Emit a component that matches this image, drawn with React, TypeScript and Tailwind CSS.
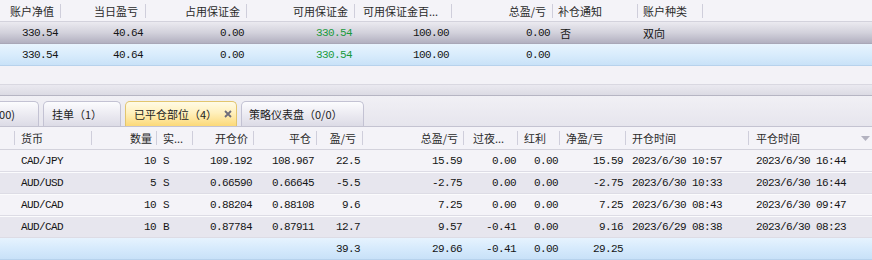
import React from "react";

const cjk = "font-['Noto_Sans_CJK_SC',sans-serif] text-[11px] leading-[16px]";
const mono = "font-['Liberation_Mono','Noto_Sans_CJK_SC',monospace] text-[11px] tracking-[-0.6px] leading-[16px]";

type HProps = { w: string; right?: boolean; pad: string; sep?: boolean; children?: React.ReactNode; extra?: React.ReactNode };

function HCell({ w, right, pad, sep = true, children, extra }: HProps) {
  return (
    <div className={`${w} shrink-0 h-full flex items-center`}>
      <div className={`flex-1 min-w-0 whitespace-nowrap overflow-hidden ${right ? "text-right" : "text-left"} ${pad} ${cjk} text-[#2a2a2a]`}>
        {children}
      </div>
      {extra}
      {sep && <div className="w-px h-[14px] bg-[#cfcedb] shrink-0" />}
    </div>
  );
}

type DProps = { w: string; right?: boolean; pad: string; font?: string; color?: string; children?: React.ReactNode };

function DCell({ w, right, pad, font = mono, color = "text-[#151515]", children }: DProps) {
  return (
    <div className={`${w} shrink-0 h-full flex items-center`}>
      <div className={`flex-1 min-w-0 whitespace-nowrap overflow-hidden ${right ? "text-right" : "text-left"} ${pad} ${font} ${color}`}>
        {children}
      </div>
    </div>
  );
}

const topW = ["w-[61px]", "w-[85px]", "w-[101px]", "w-[108px]", "w-[97px]", "w-[101px]", "w-[85px]", "w-[65px]"];

function TopRow({ bg, first }: { bg: string; first: boolean }) {
  return (
    <div className={`flex h-[22px] ${bg}`}>
      <DCell w={topW[0]} right pad="pr-[3px]">330.54</DCell>
      <DCell w={topW[1]} right pad="pr-[3px]">40.64</DCell>
      <DCell w={topW[2]} right pad="pr-[3px]">0.00</DCell>
      <DCell w={topW[3]} right pad="pr-[3px]" color="text-[#1a9a3c]">330.54</DCell>
      <DCell w={topW[4]} right pad="pr-[3px]">100.00</DCell>
      <DCell w={topW[5]} right pad="pr-[3px]">0.00</DCell>
      <DCell w={topW[6]} pad="pl-[7px]" font={cjk}>{first ? "否" : ""}</DCell>
      <DCell w={topW[7]} pad="pl-[5px]" font={cjk}>{first ? "双向" : ""}</DCell>
      <div className="flex-1" />
    </div>
  );
}

const bW = [
  "w-[15px]", "w-[77px]", "w-[65px]", "w-[36px]", "w-[61px]", "w-[63px]", "w-[46px]",
  "w-[101px]", "w-[54px]", "w-[42px]", "w-[66px]", "w-[123px]", "w-[123px]",
];

type Row = string[];
const rows: Row[] = [
  ["CAD/JPY", "10", "S", "109.192", "108.967", "22.5", "15.59", "0.00", "0.00", "15.59", "2023/6/30 10:57", "2023/6/30 16:44"],
  ["AUD/USD", "5", "S", "0.66590", "0.66645", "-5.5", "-2.75", "0.00", "0.00", "-2.75", "2023/6/30 10:33", "2023/6/30 16:44"],
  ["AUD/CAD", "10", "S", "0.88204", "0.88108", "9.6", "7.25", "0.00", "0.00", "7.25", "2023/6/30 08:43", "2023/6/30 09:47"],
  ["AUD/CAD", "10", "B", "0.87784", "0.87911", "12.7", "9.57", "-0.41", "0.00", "9.16", "2023/6/29 08:38", "2023/6/30 08:23"],
  ["", "", "", "", "", "39.3", "29.66", "-0.41", "0.00", "29.25", "", ""],
];

function BottomRow({ r, bg }: { r: Row; bg: string }) {
  return (
    <div className={`flex h-[22px] ${bg}`}>
      <DCell w={bW[0]} pad="" />
      <DCell w={bW[1]} pad="pl-[6px]">{r[0]}</DCell>
      <DCell w={bW[2]} right pad="pr-[1px]">{r[1]}</DCell>
      <DCell w={bW[3]} pad="pl-[6px]">{r[2]}</DCell>
      <DCell w={bW[4]} right pad="pr-[2px]">{r[3]}</DCell>
      <DCell w={bW[5]} right pad="pr-[3px]">{r[4]}</DCell>
      <DCell w={bW[6]} right pad="pr-[3px]">{r[5]}</DCell>
      <DCell w={bW[7]} right pad="pr-[2px]">{r[6]}</DCell>
      <DCell w={bW[8]} right pad="pr-[2px]">{r[7]}</DCell>
      <DCell w={bW[9]} right pad="pr-[2px]">{r[8]}</DCell>
      <DCell w={bW[10]} right pad="pr-[3px]">{r[9]}</DCell>
      <DCell w={bW[11]} pad="pl-[6px]">{r[10]}</DCell>
      <DCell w={bW[12]} pad="pl-[7px]">{r[11]}</DCell>
    </div>
  );
}

const tabInactive =
  "h-[25px] shrink-0 flex items-center border border-b-0 border-[#c3c2d3] rounded-t-[5px] bg-[linear-gradient(to_bottom,#fcfcfe,#ecebf2_50%,#dcdbe6)]";
const tabActive =
  "h-[25px] shrink-0 flex items-center border border-b-0 border-[#e2c56e] rounded-t-[5px] bg-[linear-gradient(to_bottom,#fffbe6,#fff0bd_45%,#fcd978)]";

export default function App() {
  return (
    <div className="w-[872px] h-[260px] overflow-hidden bg-[#f3f2f7] flex flex-col">
      {/* top header */}
      <div className="flex h-[22px] shrink-0 border-b border-[#d3d2dc] bg-[#f4f3f8]">
        <HCell w={topW[0]} right pad="pr-[6px]">账户净值</HCell>
        <HCell w={topW[1]} right pad="pr-[7px]">当日盈亏</HCell>
        <HCell w={topW[2]} right pad="pr-[6px]">占用保证金</HCell>
        <HCell w={topW[3]} right pad="pr-[6px]">可用保证金</HCell>
        <HCell w={topW[4]} pad="pl-[8px]">可用保证金百...</HCell>
        <HCell w={topW[5]} right pad="pr-[6px]">总盈/亏</HCell>
        <HCell w={topW[6]} pad="pl-[5px]">补仓通知</HCell>
        <HCell w={topW[7]} pad="pl-[5px]">账户种类</HCell>
        <div className="flex-1" />
      </div>
      <TopRow first bg="bg-[linear-gradient(to_bottom,#ebeaf0,#d3d2dc_50%,#b2b0c0)] border-b border-[#a9a7b7]" />
      <TopRow first={false} bg="bg-[linear-gradient(to_bottom,#e8f4fe,#d9ecfc_50%,#c9e2f8)] border-b border-[#b7d2ec]" />
      <div className="h-[18px] shrink-0 bg-[#f3f2f7]" />
      {/* horizontal scroll band */}
      <div className="h-[12px] shrink-0 border-t border-[#d9d8e1] border-b border-b-[#b6b5c3] bg-[linear-gradient(to_bottom,#eae9f0,#dcdbe4)]" />
      {/* tab strip */}
      <div className="h-[31px] shrink-0 flex items-end gap-[4px] bg-[linear-gradient(to_bottom,#f1f0f5,#e6e5ed)] border-b border-[#c4c3d1]">
        <div className={`${tabInactive} w-[39px] border-l-0 rounded-tl-none justify-end overflow-hidden pr-[23px]`}>
          <span className={`${cjk} shrink-0 whitespace-nowrap text-[#222]`}>(0/00)</span>
        </div>
        <div className={`${tabInactive} w-[78px] pl-[8px]`}>
          <span className={`${cjk} whitespace-nowrap text-[#222]`}>挂单（1）</span>
        </div>
        <div className={`${tabActive} w-[112px] pl-[8px]`}>
          <span className={`${cjk} whitespace-nowrap text-[#222]`}>已平仓部位（4）</span>
          <svg className="ml-[7px]" width="8" height="8" viewBox="0 0 8 8">
            <path d="M1 1 L7 7 M7 1 L1 7" stroke="#6e6d7a" strokeWidth="1.8" />
          </svg>
        </div>
        <div className={`${tabInactive} w-[123px] pl-[7px]`}>
          <span className={`${cjk} whitespace-nowrap text-[#222]`}>策略仪表盘（0/0）</span>
        </div>
      </div>
      {/* bottom header */}
      <div className="flex h-[23px] shrink-0 border-b border-[#d3d2dc] bg-[#f4f3f8]">
        <HCell w={bW[0]} pad="" />
        <HCell w={bW[1]} pad="pl-[6px]">货币</HCell>
        <HCell w={bW[2]} right pad="pr-[4px]">数量</HCell>
        <HCell w={bW[3]} pad="pl-[6px]">实...</HCell>
        <HCell w={bW[4]} right pad="pr-[5px]">开仓价</HCell>
        <HCell w={bW[5]} right pad="pr-[5px]">平仓</HCell>
        <HCell w={bW[6]} right pad="pr-[6px]">盈/亏</HCell>
        <HCell w={bW[7]} right pad="pr-[5px]">总盈/亏</HCell>
        <HCell w={bW[8]} pad="pl-[9px]">过夜...</HCell>
        <HCell w={bW[9]} pad="pl-[6px]">红利</HCell>
        <HCell w={bW[10]} pad="pl-[6px]">净盈/亏</HCell>
        <HCell w={bW[11]} pad="pl-[6px]">开仓时间</HCell>
        <HCell
          w={bW[12]}
          pad="pl-[7px]"
          sep={false}
          extra={
            <svg className="mr-[2px] shrink-0" width="9" height="5" viewBox="0 0 9 5">
              <path d="M0 0 H9 L4.5 5 Z" fill="#b3b2c0" />
            </svg>
          }
        >
          平仓时间
        </HCell>
      </div>
      <BottomRow r={rows[0]} bg="bg-[#f4f3f8] border-b border-[#dddce5]" />
      <BottomRow r={rows[1]} bg="bg-[#e7e6ee] border-t border-[#fbfbfd] border-b border-b-[#dddce5]" />
      <BottomRow r={rows[2]} bg="bg-[#f4f3f8] border-t border-[#fbfbfd] border-b border-b-[#dddce5]" />
      <BottomRow r={rows[3]} bg="bg-[#e7e6ee] border-t border-[#fbfbfd] border-b border-b-[#dddce5]" />
      <BottomRow r={rows[4]} bg="bg-[linear-gradient(to_bottom,#e6f3fe,#d6eafc_50%,#c8e1f8)] border-b border-[#b7d2ec]" />
    </div>
  );
}
